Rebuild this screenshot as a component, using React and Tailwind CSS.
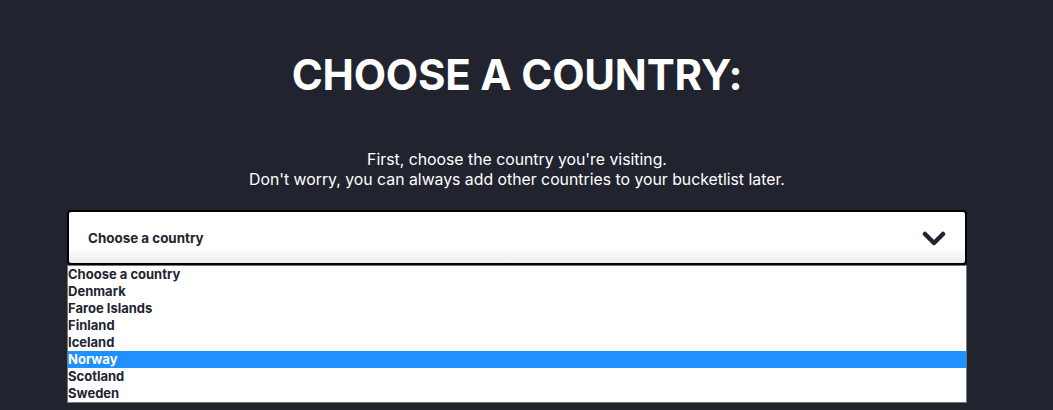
export default function App() {
  const items = ["Choose a country", "Denmark", "Faroe Islands", "Finland", "Iceland", "Norway", "Scotland", "Sweden"];
  return (
    <div className="w-[1053px] h-[410px] bg-[#21242f] overflow-hidden" style={{ fontFamily: "Inter, 'Noto Sans', sans-serif" }}>
      <div className="w-[1034px] flex flex-col items-center">
        <h1 className="mt-[50px] text-[42px] leading-[50px] font-bold text-white tracking-[-0.2px]">CHOOSE A COUNTRY:</h1>
        <div className="mt-[50px] text-center text-[15.8px] leading-[20px] text-white">
          <p>First, choose the country you're visiting.</p>
          <p>Don't worry, you can always add other countries to your bucketlist later.</p>
        </div>
        <div className="relative mt-[20px] w-[900px]">
          <div className="h-[55px] rounded-[4px] border-2 border-black bg-gradient-to-b from-white from-70% to-[#ececec] flex items-center justify-between pl-[19px] pr-[19px] pt-[2px]">
            <span className="text-[13.4px] font-bold text-[#22252f]">Choose a country</span>
            <svg width="24" height="16" viewBox="0 0 24 16">
              <path d="M3 3 L12 12 L21 3" fill="none" stroke="#22252f" strokeWidth="4.5" strokeLinecap="round" strokeLinejoin="round" />
            </svg>
          </div>
          <div className="absolute left-0 top-[55px] w-[900px] bg-white border border-[#767676]">
            {items.map((it) => (
              <div key={it} className={`h-[17px] leading-[17px] text-[13px] font-bold ${it === "Norway" ? "bg-[#1e90ff] text-white" : "text-[#22252f]"}`}>{it}</div>
            ))}
          </div>
        </div>
      </div>
    </div>
  );
}
